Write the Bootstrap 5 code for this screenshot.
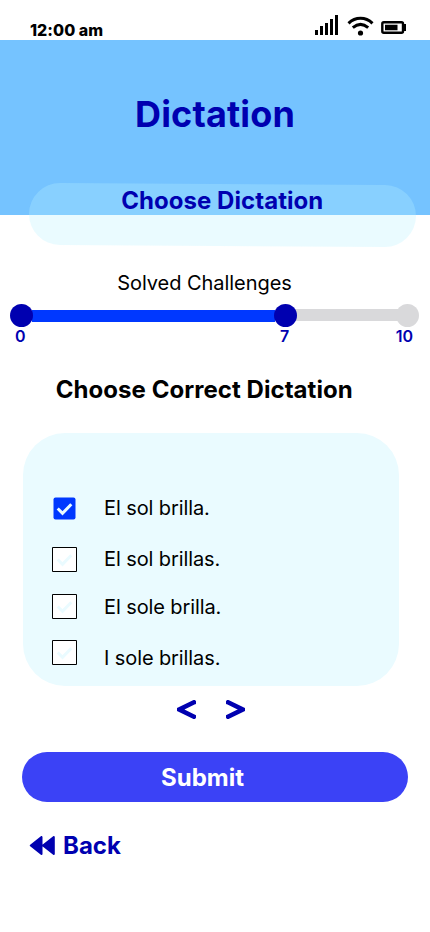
<!DOCTYPE html>
<html lang="en">
<head>
<meta charset="utf-8">
<meta name="viewport" content="width=device-width, initial-scale=1">
<title>Dictation</title>
<link href="https://cdn.jsdelivr.net/npm/bootstrap@5.3.0/dist/css/bootstrap.min.css" rel="stylesheet">
<style>
body{font-family:Inter,"Liberation Sans",sans-serif;color:#000;background:#fff;width:430px;height:932px;overflow:hidden}
.navy,.navy:hover{color:#0000b0}
svg{display:block}
.status-bar{height:40px;padding:20px 23px 0 30px}
.clock{font-size:16px;font-weight:800;line-height:21px;letter-spacing:.05px}
.signals{margin-top:-6px}
.hero{height:175px;background:#75c3ff;padding-top:49px}
.hero h1{font-size:36px;font-weight:700;line-height:50px;letter-spacing:.15px}
.picker{width:387px;height:61.5px;margin:-31px 0 0 29px;border-radius:31px;background:rgba(182,240,255,.29);transform:rotate(.34deg)}
.picker-label{font-size:24px;font-weight:700;line-height:30px;margin-top:-60px;width:444.5px;position:relative;letter-spacing:.05px}
.solved{font-size:20px;line-height:26px;margin-top:54px;width:409px;letter-spacing:-.05px}
.track{height:24px;margin:8px 11px 0 10px}
.knob{width:23px;height:23px;border-radius:50%;background:#0000b0;flex:none;position:relative}
.knob.knob-off,.rail.rail-off{background:#d9d9db}
.rail{height:12px;background:#0038ff;width:243px;margin:0 -1px}
.rail.rail-off{margin:-2px -4px 0}
.ticks{font-size:16px;font-weight:600;line-height:20px;padding:0 17px 0 15px;margin-top:-2px}
.ticks .seven{margin-left:254.5px}
.question{font-size:24px;font-weight:700;line-height:30px;margin-top:29px;width:408.5px;letter-spacing:.05px}
.answers{width:376px;height:253px;margin:28px 0 0 23px;border:0;border-radius:42px;background:#eafbff;padding:50px 0 0 29px}
.answer{font-size:20px;line-height:26px;gap:27px;letter-spacing:-.1px}
.row-tall{height:51px}
.row-short{height:45px}
.box{width:25px;height:25px;flex:none}
.box-up{margin-bottom:2px}
.box-last{margin-top:2px}
.text-last{padding-top:7px}
.pager{height:19px;margin-top:14px;padding-left:177px;gap:30px}
.send,.send:hover{width:386px;height:50px;margin:33px 0 0 22px;border:0;border-radius:25px;background:#3b42f6;color:#fff;font-size:24px;font-weight:700;padding:1px 25px 0 0;line-height:50px}
.back{font-size:24px;font-weight:700;line-height:30px;margin:29px 0 0 29px;gap:8px}
</style>
<script src="https://cdn.jsdelivr.net/npm/bootstrap@5.3.0/dist/js/bootstrap.bundle.min.js"></script>
</head>
<body>
<div class="status-bar d-flex justify-content-between">
  <span class="clock">12:00 am</span>
  <svg class="signals" width="93" height="24" viewBox="0 0 93 24" aria-hidden="true">
    <path d="M1 16h3v5H1zM6 12h3v9H6zM11 9h3v12h-3zM16 5h3v16h-3zM21 1h3v20h-3z"/>
    <g fill="none" stroke="#000" stroke-width="3"><path d="M34.500 9.300C41.500 2.600 51.500 2.600 58.500 9.300"/><path d="M38.800 13.600Q46.500 7.100 54.200 13.600"/></g>
    <circle cx="46.500" cy="19" r="2.600"/>
    <rect x="68.300" y="8.300" width="20.700" height="10.400" rx="1.500" fill="none" stroke="#000" stroke-width="2.400"/>
    <path d="M71 10.700h12.500v5.600H71zM90 10h2v7h-2z"/>
  </svg>
</div>
<header class="hero text-center"><h1 class="navy m-0">Dictation</h1></header>
<div class="picker"></div>
<div class="picker-label navy text-center">Choose Dictation</div>
<div class="solved text-center">Solved Challenges</div>
<div class="track d-flex align-items-center">
  <span class="knob"></span><span class="rail"></span><span class="knob"></span><span class="rail rail-off flex-fill w-auto"></span><span class="knob knob-off"></span>
</div>
<div class="ticks navy d-flex"><span>0</span><span class="seven">7</span><span class="ms-auto">10</span></div>
<h2 class="question text-center mb-0">Choose Correct Dictation</h2>
<div class="answers card">
  <div class="answer row-tall d-flex align-items-center">
    <svg class="box" viewBox="0 0 25 25"><rect x="1.500" y="1.500" width="22" height="22" rx="2" fill="#0038ff"/><path d="m5.700 12.500 4.800 4.800 8.800-9" fill="none" stroke="#eafbff" stroke-width="3"/></svg><span>El sol brilla.</span>
  </div>
  <div class="answer row-tall d-flex align-items-center">
    <svg class="box" viewBox="0 0 25 25"><path d="M.5.5h24v24H.5z" fill="#fff" stroke="#000"/><path d="m5.700 12.500 4.800 4.800 8.800-9" fill="none" stroke="#eafbff" stroke-width="3"/></svg><span>El sol brillas.</span>
  </div>
  <div class="answer row-short d-flex align-items-center">
    <svg class="box box-up" viewBox="0 0 25 25"><path d="M.5.5h24v24H.5z" fill="#fff" stroke="#000"/><path d="m5.700 12.500 4.800 4.800 8.800-9" fill="none" stroke="#eafbff" stroke-width="3"/></svg><span>El sole brilla.</span>
  </div>
  <div class="answer d-flex align-items-start pt-2">
    <svg class="box box-last" viewBox="0 0 25 25"><path d="M.5.5h24v24H.5z" fill="#fff" stroke="#000"/><path d="m5.700 12.500 4.800 4.800 8.800-9" fill="none" stroke="#eafbff" stroke-width="3"/></svg><span class="text-last">I sole brillas.</span>
  </div>
</div>
<div class="pager d-flex">
  <svg width="19" height="19" viewBox="0 0 19 19"><path d="M17 2.300 2.400 9.500l14.600 7.200" fill="none" stroke="#0000b0" stroke-width="4.600" stroke-linecap="round"/></svg>
  <svg width="19" height="19" viewBox="0 0 19 19"><path d="m2 2.300 14.600 7.200-14.600 7.200" fill="none" stroke="#0000b0" stroke-width="4.600" stroke-linecap="round"/></svg>
</div>
<button class="send btn d-block" type="button">Submit</button>
<a class="back navy d-inline-flex align-items-center text-decoration-none" href="#">
  <svg width="26" height="20" viewBox="0 0 26 20"><path d="M1.800 9.500 12.500 1v17zM14 9.500 24.800 1v17z" fill="#0000b0" stroke="#0000b0" stroke-width="2" stroke-linejoin="round"/></svg>
  <span>Back</span>
</a>
</body>
</html>
